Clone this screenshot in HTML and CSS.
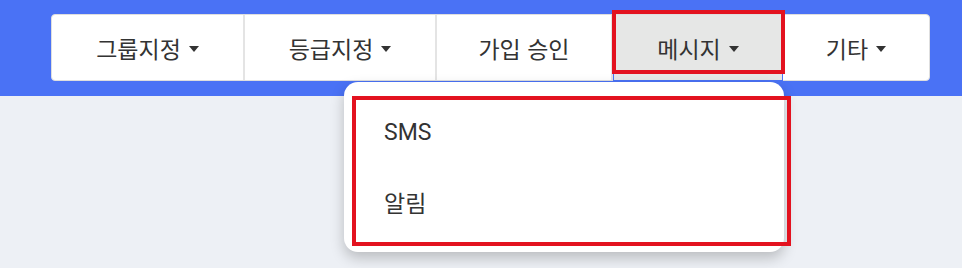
FILE: index.html
```html
<!DOCTYPE html>
<html lang="ko">
<head>
  <meta charset="UTF-8">
  <title>회원 관리</title>
  <link rel="stylesheet" href="styles.css">
</head>
<body>
<div class="topbar">
  <div class="btn-group">
    <button class="btn w1">그룹지정<span class="caret"></span></button>
    <button class="btn w2">등급지정<span class="caret"></span></button>
    <button class="btn w3">가입 승인</button>
    <div class="btn-wrap">
      <button class="btn w4 active">메시지<span class="caret"></span></button>
      <div class="mark mark-btn"></div>
      <div class="dropdown">
        <a class="dropdown-item" href="#">SMS</a>
        <a class="dropdown-item" href="#">알림</a>
      </div>
      <div class="mark mark-menu"></div>
    </div>
    <button class="btn w5">기타<span class="caret"></span></button>
  </div>
</div>
<div class="content"></div>
</body>
</html>
```

FILE: styles.css
```css
html, body {
  margin: 0;
  min-height: 100%;
}
body {
  background-color: #edf0f5;
  font-family: Roboto, "Noto Sans CJK KR", sans-serif;
  color: #333;
}
.topbar {
  position: relative;
  z-index: 2;
  background-color: #4a72f5;
  height: 96px;
  padding-top: 14px;
  padding-left: 51px;
  box-sizing: border-box;
}
.content {
  height: 172px;
}
.btn-group {
  display: flex;
  width: 879px;
  height: 67px;
  background: #fff;
  border-radius: 4px;
  box-sizing: border-box;
  border: 1px solid #dedede;
}
.btn {
  display: flex;
  align-items: center;
  justify-content: center;
  height: 100%;
  margin: 0;
  padding: 0;
  border: none;
  border-right: 2px solid #e4e4e4;
  background: transparent;
  font-family: "Noto Sans CJK KR", Roboto, sans-serif;
  font-size: 23px;
  color: #333;
  box-sizing: border-box;
}
.btn.w1 { width: 193px; }
.btn.w2 { width: 192px; }
.btn.w3 { width: 176px; }
.btn.w4 { width: 170px; }
.btn.w5 { width: 146px; border-right: none; }
.btn.active {
  background-color: #e6e7e6;
  border: 1px solid #4a72f5;
  border-top: none;
  height: 66px;
}
.caret {
  display: inline-block;
  margin-left: 8px;
  border-top: 6px solid #333;
  border-left: 5px solid transparent;
  border-right: 5px solid transparent;
  margin-top: 2px;
}
.btn-wrap {
  position: relative;
  height: 100%;
}
.mark {
  position: absolute;
  border: 4px solid #e3121f;
  box-sizing: border-box;
}
.mark-btn {
  left: -1px;
  top: -5px;
  width: 173px;
  height: 64px;
}
.dropdown {
  position: absolute;
  left: -269px;
  top: 67px;
  width: 440px;
  height: 170px;
  padding: 16px 0;
  box-sizing: border-box;
  background: #fff;
  border-radius: 14px;
  box-shadow: 0 6px 14px rgba(0, 0, 0, 0.22);
}
.dropdown-item {
  display: flex;
  align-items: center;
  height: 69px;
  padding-left: 40px;
  font-size: 23px;
  color: #333;
  text-decoration: none;
}
.mark-menu {
  left: -261px;
  top: 81px;
  width: 439px;
  height: 150px;
}
```
